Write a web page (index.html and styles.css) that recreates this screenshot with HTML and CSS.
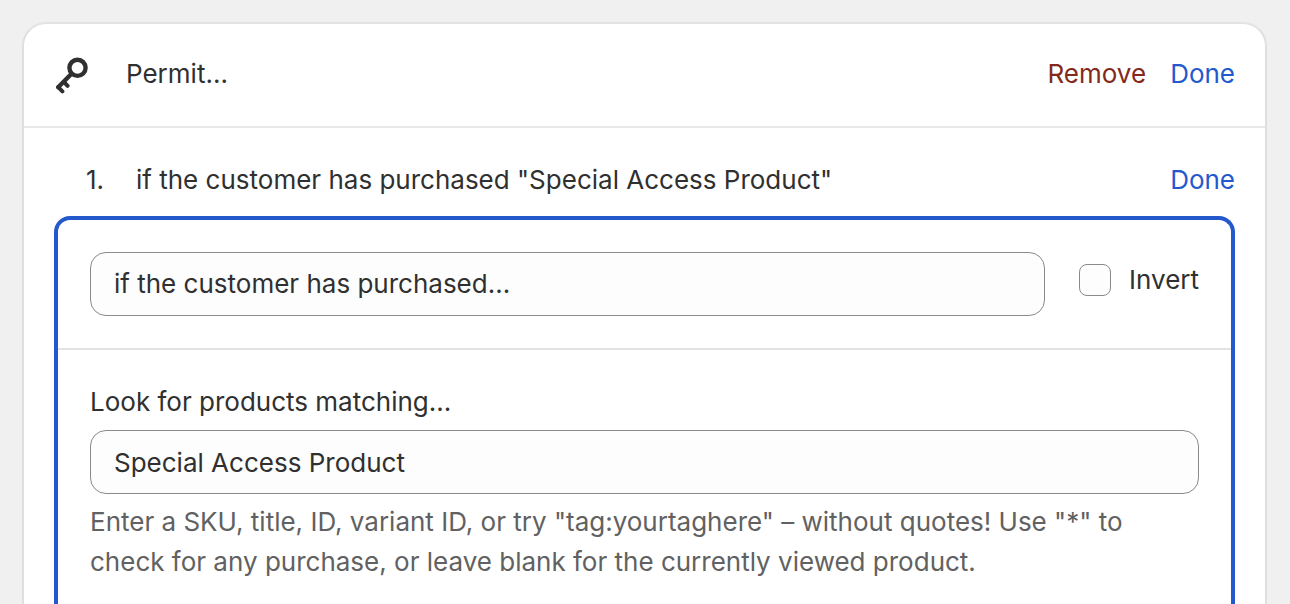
FILE: index.html
```html
<!DOCTYPE html>
<html lang="en">
<head>
<meta charset="utf-8">
<title>Permit rule</title>
<link rel="stylesheet" href="styles.css">
</head>
<body>
<main class="card">
  <header class="card-header">
    <svg class="key-icon" viewBox="0 0 36 40" fill="none" stroke="currentColor" stroke-width="4.4" stroke-linecap="round" stroke-linejoin="round" aria-hidden="true">
      <circle cx="23.5" cy="13.8" r="8.1"/>
      <path d="M17.5 19.7L4.2 33.2"/>
      <path stroke-width="4" d="M4.2 33.2L8.4 37.4M9.8 27.8L13.6 31.8"/>
    </svg>
    <h1 class="card-title">Permit...</h1>
    <div class="actions">
      <button class="link danger" type="button">Remove</button>
      <button class="link" type="button">Done</button>
    </div>
  </header>
  <section class="rules">
    <div class="rule-row">
      <span class="rule-number">1.</span>
      <span class="rule-text">if the customer has purchased "Special Access Product"</span>
      <button class="link" type="button">Done</button>
    </div>
    <form class="editor">
      <div class="condition">
        <select class="field condition-select" aria-label="Condition">
          <option>if the customer has purchased...</option>
        </select>
        <label class="invert" for="invert"><input class="check" id="invert" type="checkbox">Invert</label>
      </div>
      <div class="match">
        <label class="match-label" for="match">Look for products matching...</label>
        <input class="field" id="match" type="text" value="Special Access Product">
        <p class="help">Enter a SKU, title, ID, variant ID, or try "tag:yourtaghere" – without quotes! Use "*" to check for any purchase, or leave blank for the currently viewed product.</p>
      </div>
    </form>
  </section>
</main>
</body>
</html>
```
FILE: styles.css
```css
* { box-sizing: border-box; }
body {
  margin: 0;
  padding: 22px 23px 0 22px;
  background: #f0f0f0;
  color: #303030;
  font: 26px/40px Inter, "Liberation Sans", sans-serif;
  overflow: hidden;
}
.card {
  background: #fff;
  border: 2px solid #dfdfdf;
  border-top-color: #e3e3e3;
  border-bottom: 0;
  border-radius: 24px 24px 0 0;
}
.card-header {
  display: flex;
  align-items: center;
  padding: 30px 30px 32px;
  border-bottom: 2px solid #e8e8e8;
}
.key-icon { width: 36px; height: 40px; margin-right: 36px; }
.card-title { margin: 0; font: inherit; }
.actions { display: flex; gap: 24px; margin-left: auto; }
.link {
  padding: 0;
  border: 0;
  background: none;
  color: #2359cd;
  font: inherit;
  cursor: pointer;
}
.danger { color: #84291a; }
.rules { padding: 32px 30px 0; }
.rule-row { display: flex; padding-left: 32px; }
.rule-number { width: 50px; }
.rule-text { flex: 1; }
.editor {
  margin-top: 16px;
  border: 4px solid #2359cd;
  border-bottom: 0;
  border-radius: 16px 16px 0 0;
}
.condition {
  display: flex;
  gap: 34px;
  padding: 32px;
  border-bottom: 2px solid #e3e3e3;
}
.field {
  display: block;
  appearance: none;
  width: 100%;
  height: 64px;
  margin: 0;
  padding: 0 23px;
  border: 1px solid #8a8a8a;
  border-radius: 16px;
  background: #fdfdfd;
  color: inherit;
  font: inherit;
}
.condition-select { flex: 1; }
.invert { display: flex; align-items: center; height: 56px; gap: 18px; }
.check {
  appearance: none;
  width: 32px;
  height: 32px;
  margin: 0;
  border: 1px solid #8a8a8a;
  border-radius: 8px;
  background: #fdfdfd;
}
.match { padding: 32px 32px 24px; }
.match-label { display: block; margin-bottom: 8px; }
.help { margin: 8px 0 0; color: #616161; }
```
